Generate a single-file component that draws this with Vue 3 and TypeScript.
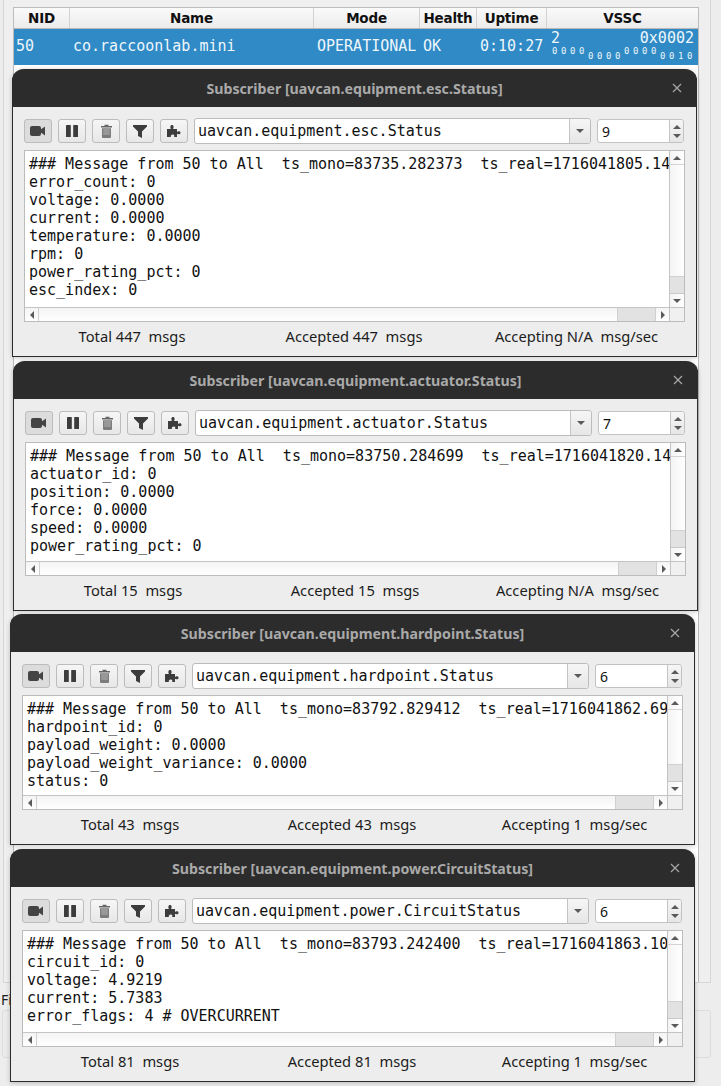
<script setup lang="ts">
interface Win {
  id: string
  topic: string
  count: string
  lines: string[]
  total: string
  accepted: string
  rate: string
}
const windows: Win[] = [
  { id: 'w1', topic: 'uavcan.equipment.esc.Status', count: '9',
    lines: ['### Message from 50 to All  ts_mono=83735.282373  ts_real=1716041805.14', 'error_count: 0', 'voltage: 0.0000', 'current: 0.0000', 'temperature: 0.0000', 'rpm: 0', 'power_rating_pct: 0', 'esc_index: 0'],
    total: 'Total 447  msgs', accepted: 'Accepted 447  msgs', rate: 'Accepting N/A  msg/sec' },
  { id: 'w2', topic: 'uavcan.equipment.actuator.Status', count: '7',
    lines: ['### Message from 50 to All  ts_mono=83750.284699  ts_real=1716041820.14', 'actuator_id: 0', 'position: 0.0000', 'force: 0.0000', 'speed: 0.0000', 'power_rating_pct: 0'],
    total: 'Total 15  msgs', accepted: 'Accepted 15  msgs', rate: 'Accepting N/A  msg/sec' },
  { id: 'w3', topic: 'uavcan.equipment.hardpoint.Status', count: '6',
    lines: ['### Message from 50 to All  ts_mono=83792.829412  ts_real=1716041862.69', 'hardpoint_id: 0', 'payload_weight: 0.0000', 'payload_weight_variance: 0.0000', 'status: 0'],
    total: 'Total 43  msgs', accepted: 'Accepted 43  msgs', rate: 'Accepting 1  msg/sec' },
  { id: 'w4', topic: 'uavcan.equipment.power.CircuitStatus', count: '6',
    lines: ['### Message from 50 to All  ts_mono=83793.242400  ts_real=1716041863.10', 'circuit_id: 0', 'voltage: 4.9219', 'current: 5.7383', 'error_flags: 4 # OVERCURRENT'],
    total: 'Total 81  msgs', accepted: 'Accepted 81  msgs', rate: 'Accepting 1  msg/sec' },
]
const columns = [
  { label: 'NID', cls: 'c-nid' }, { label: 'Name', cls: 'c-name' }, { label: 'Mode', cls: 'c-mode' },
  { label: 'Health', cls: 'c-health' }, { label: 'Uptime', cls: 'c-uptime' }, { label: 'VSSC', cls: 'c-vssc' },
]
const nibbles = ['0000', '0000', '0000', '0010']
</script>

<template>
  <div class="desk">
    <div class="main-frame">
      <div class="table">
        <div class="thead">
          <div v-for="c in columns" :key="c.label" class="th" :class="c.cls">{{ c.label }}</div>
        </div>
        <div class="row">
          <div class="td c-nid">50</div>
          <div class="td c-name">co.raccoonlab.mini</div>
          <div class="td c-mode">OPERATIONAL</div>
          <div class="td c-health">OK</div>
          <div class="td c-uptime">0:10:27</div>
          <div class="td c-vssc vssc">
            <div class="vssc-top"><span>2</span><span>0x0002</span></div>
            <div class="bits">
              <span v-for="(n, i) in nibbles" :key="i" class="nib" :class="{ low: i % 2 === 1 }">
                <span v-for="(d, j) in n" :key="j" class="bit">{{ d }}</span>
              </span>
            </div>
          </div>
        </div>
      </div>
    </div>
    <div class="fi">Fi</div>
    <div class="group"></div>

    <div v-for="w in windows" :key="w.id" class="win" :class="w.id">
      <div class="titlebar">
        <span class="title">Subscriber [{{ w.topic }}]</span>
        <svg class="close" width="10" height="10" viewBox="0 0 10 10"><path d="M1 1 9 9M9 1 1 9" stroke="#a8a8a8" stroke-width="1.2" fill="none"/></svg>
      </div>
      <div class="body">
        <div class="toolbar">
          <button class="tool on">
            <svg width="16" height="12" viewBox="0 0 16 12"><rect x="0" y="1" width="11" height="10" rx="2" fill="#444"/><path d="M10 5 15 1.500V10.500L10 7Z" fill="#444"/></svg>
          </button>
          <button class="tool">
            <svg width="12" height="12" viewBox="0 0 12 12"><rect x="0" y="0" width="4.800" height="12" rx=".6" fill="#3c3c3c"/><rect x="7.200" y="0" width="4.800" height="12" rx=".6" fill="#3c3c3c"/></svg>
          </button>
          <button class="tool">
            <svg width="11" height="14" viewBox="0 0 11 14"><path d="M3.500 2V.8h4V2H11v1.400H0V2Z" fill="#666"/><path d="M1 4.200h9V13a1 1 0 0 1-1 1H2a1 1 0 0 1-1-1Z" fill="#7c7c7c"/><path d="M2.200 6h6.600M2.200 8h6.600M2.200 10h6.600" stroke="#c4c4c4" stroke-width=".8"/></svg>
          </button>
          <button class="tool">
            <svg width="14" height="13" viewBox="0 0 14 13"><path d="M0 0H14V1.500L9 6.500V13L5 11V6.500L0 1.500Z" fill="#3c3c3c"/></svg>
          </button>
          <button class="tool">
            <svg width="14" height="14" viewBox="0 0 14 14"><path d="M0 5H4C3 3.500 3.200 1 5 1S7 3.500 6 5H10V8C11 7 13.500 7 13.500 8.800S11 10.500 10 9.800V13H7C7.800 12 7.500 10.500 5.800 10.500S3.200 12 4 13H0Z" fill="#3c3c3c"/></svg>
          </button>
          <div class="combo">
            <span class="combo-text">{{ w.topic }}</span>
            <span class="combo-btn"><i class="tri down"></i></span>
          </div>
          <div class="spin">
            <span class="spin-text">{{ w.count }}</span>
            <span class="spin-btns"><i class="tri up small"></i><i class="tri down small"></i></span>
          </div>
        </div>

        <div class="view">
          <div class="view-main">
            <div class="text">
              <div v-for="(l, i) in w.lines" :key="i" class="line">{{ l }}</div>
            </div>
            <div class="vbar">
              <span class="sb-end top"><i class="tri up"></i></span>
              <span class="sb-track"></span>
              <span class="sb-handle-v"></span>
              <span class="sb-end bottom"><i class="tri down"></i></span>
            </div>
          </div>
          <div class="hbar">
            <span class="sb-end-h left"><i class="tri lft"></i></span>
            <span class="sb-track-h"></span>
            <span class="sb-handle-h"></span>
            <span class="sb-end-h right"><i class="tri rgt"></i></span>
            <span class="corner"></span>
          </div>
        </div>

        <div class="status">
          <span class="st st-a">{{ w.total }}</span>
          <span class="st st-b">{{ w.accepted }}</span>
          <span class="st st-c">{{ w.rate }}</span>
        </div>
      </div>
    </div>
  </div>
</template>

<style>
html, body { margin: 0; padding: 0; background: #ededed; }
</style>

<style scoped>
.desk {
  position: relative;
  width: 721px;
  height: 1086px;
  overflow: hidden;
  background: #ededed;
  font-family: "Noto Sans", "Open Sans", sans-serif;
  color: #1c1c1c;
}
.main-frame {
  box-sizing: border-box;
  width: 708px;
  height: 983px;
  margin-left: 3px;
  padding: 7px 12px 0 9px;
  background: #efefef;
  border-right: 1px solid #d6d6d6;
  border-bottom: 1px solid #d6d6d6;
  border-left: 1px solid #d6d6d6;
}
.table {
  width: 686px;
  height: 975px;
  background: #fff;
  border: 1px solid #bcbcbc;
  border-bottom: 0;
  box-sizing: border-box;
}
.thead { display: flex; height: 20px; background: linear-gradient(#fafafa, #ececec); border-bottom: 1px solid #b8b8b8; }
.th {
  box-sizing: border-box;
  display: flex;
  align-items: center;
  justify-content: center;
  font: 700 13.500px "DejaVu Sans", sans-serif;
  letter-spacing: -0.2px;
  color: #111;
  border-right: 1px solid #d2d2d2;
}
.th:last-child { border-right: 0; }
.c-nid { width: 56px; }
.c-name { width: 244px; }
.c-mode { width: 106px; }
.c-health { width: 57px; }
.c-uptime { width: 70px; }
.c-vssc { width: 151px; }
.row { display: flex; height: 36px; background: #2f8ac6; color: #eef6fb; }
.td {
  box-sizing: border-box;
  display: flex;
  align-items: center;
  padding: 0 0 2px 3px;
  font: 15px/18px "DejaVu Sans Mono", monospace;
}
.td.c-nid { padding-left: 2px; }
.vssc { display: block; padding: 0 4px; }
.vssc-top { display: flex; justify-content: space-between; height: 16px; line-height: 18px; }
.bits { display: flex; padding-left: 1px; }
.nib { display: flex; width: 36px; height: 13px; }
.nib.low { padding-top: 5px; height: 8px; }
.bit { width: 9px; font: 9px/13px "DejaVu Sans Mono", monospace; }

.fi { position: absolute; left: 1px; top: 990px; font-size: 14px; line-height: 20px; }
.group {
  position: absolute;
  left: 2px;
  top: 1010px;
  width: 707px;
  height: 46px;
  border: 1px solid #dcdcdc;
  border-radius: 3px;
  background: #ececec;
}

.win {
  position: absolute;
  box-sizing: border-box;
  width: 685px;
  display: flex;
  flex-direction: column;
  background: #ededed;
  border: 1px solid #2c2c2c;
  border-top: 0;
  border-radius: 12px 12px 0 0;
  box-shadow: 0 1px 5px rgba(0, 0, 0, 0.22);
}
.w1 { left: 12px; top: 69px; height: 288px; }
.w2 { left: 13px; top: 361px; height: 250px; }
.w3 { left: 10px; top: 614px; height: 231px; }
.w4 { left: 10px; top: 849px; height: 233px; }
.titlebar {
  position: relative;
  flex: none;
  box-sizing: border-box;
  height: 38px;
  margin: 0 -1px;
  padding-top: 1px;
  background: #2c2c2c;
  border-radius: 12px 12px 0 0;
  display: flex;
  align-items: center;
  justify-content: center;
}
.title { font: 700 14.200px "Noto Sans", sans-serif; color: #a9a9a9; }
.close { position: absolute; right: 15px; top: 14px; }
.body {
  flex: 1;
  min-height: 0;
  display: flex;
  flex-direction: column;
  padding: 11px 11px 0;
}
.toolbar { flex: none; display: flex; align-items: center; height: 26px; }
.tool {
  box-sizing: border-box;
  width: 28px;
  height: 24px;
  margin-right: 6px;
  padding: 0;
  display: flex;
  align-items: center;
  justify-content: center;
  background: linear-gradient(#f6f6f6, #e7e7e7);
  border: 1px solid #bcbcbc;
  border-radius: 3px;
}
.tool.on { background: #dcdcdc; }
.combo {
  box-sizing: border-box;
  width: 397px;
  height: 26px;
  display: flex;
  background: #fff;
  border: 1px solid #bcbcbc;
  border-radius: 3px;
}
.combo-text { flex: 1; padding-left: 3px; font: 15px/24px "DejaVu Sans Mono", monospace; color: #111; }
.combo-btn {
  width: 20px;
  display: flex;
  align-items: center;
  justify-content: center;
  background: linear-gradient(#f6f6f6, #e6e6e6);
  border-left: 1px solid #c4c4c4;
  border-radius: 0 3px 3px 0;
}
.spin {
  box-sizing: border-box;
  width: 87px;
  height: 24px;
  margin-left: 6px;
  display: flex;
  background: #fff;
  border: 1px solid #c2c2c2;
  border-radius: 3px;
}
.spin-text { flex: 1; padding-left: 4px; font: 14px/24px "Noto Sans", sans-serif; color: #111; }
.spin-btns {
  width: 13px;
  display: flex;
  flex-direction: column;
  align-items: center;
  justify-content: center;
  gap: 5px;
  background: linear-gradient(#f6f6f6, #e6e6e6);
  border-left: 1px solid #c4c4c4;
  border-radius: 0 3px 3px 0;
}
.tri { display: block; width: 0; height: 0; border-style: solid; border-color: transparent; }
.tri.down { border-width: 4px 4.500px 0; border-top-color: #5a5a5a; }
.tri.up { border-width: 0 4.500px 4px; border-bottom-color: #5a5a5a; }
.tri.small.up { border-width: 0 4.500px 4.500px; }
.tri.small.down { border-width: 4.500px 4.500px 0; }
.tri.lft { border-width: 4.500px 4px 4.500px 0; border-right-color: #5a5a5a; }
.tri.rgt { border-width: 4.500px 0 4.500px 4px; border-left-color: #5a5a5a; }

.view {
  flex: 1;
  min-height: 0;
  margin-top: 6px;
  display: flex;
  flex-direction: column;
  border: 1px solid #bcbcbc;
  background: #fff;
}
.view-main { flex: 1; min-height: 0; display: flex; }
.text { flex: 1; min-width: 0; overflow: hidden; padding: 4px 0 0 4px; }
.line { font: 15px/18px "DejaVu Sans Mono", monospace; white-space: pre; color: #111; }
.vbar {
  flex: none;
  width: 14px;
  display: flex;
  flex-direction: column;
  border-left: 1px solid #c4c4c4;
  background: linear-gradient(90deg, #f4f4f4, #fff);
}
.sb-end { flex: none; height: 13px; display: flex; align-items: center; justify-content: center; }
.sb-end.top { border-bottom: 1px solid #d4d4d4; }
.sb-end.bottom { border-top: 1px solid #c8c8c8; }
.sb-track { flex: 1; }
.sb-handle-v { flex: none; height: 16px; background: #e2e2e2; border-top: 1px solid #d0d0d0; }
.hbar {
  flex: none;
  box-sizing: border-box;
  height: 14px;
  display: flex;
  border-top: 1px solid #c4c4c4;
  background: linear-gradient(#f4f4f4, #fff);
}
.sb-end-h { flex: none; width: 13px; display: flex; align-items: center; justify-content: center; }
.sb-end-h.left { border-right: 1px solid #d0d0d0; }
.sb-end-h.right { border-left: 1px solid #d0d0d0; }
.sb-track-h { flex: 1; }
.sb-handle-h { flex: none; width: 37px; background: #e2e2e2; border-left: 1px solid #d0d0d0; }
.corner { flex: none; width: 15px; box-sizing: border-box; background: #f0f0f0; border-left: 1px solid #c4c4c4; }
.status {
  flex: none;
  box-sizing: border-box;
  height: 34px;
  padding-top: 4px;
  display: grid;
  grid-template-columns: 216px 228px 1fr;
  align-items: start;
}
.st { font: 14.700px/20px "Noto Sans", sans-serif; white-space: pre; text-align: center; color: #1c1c1c; }
</style>
